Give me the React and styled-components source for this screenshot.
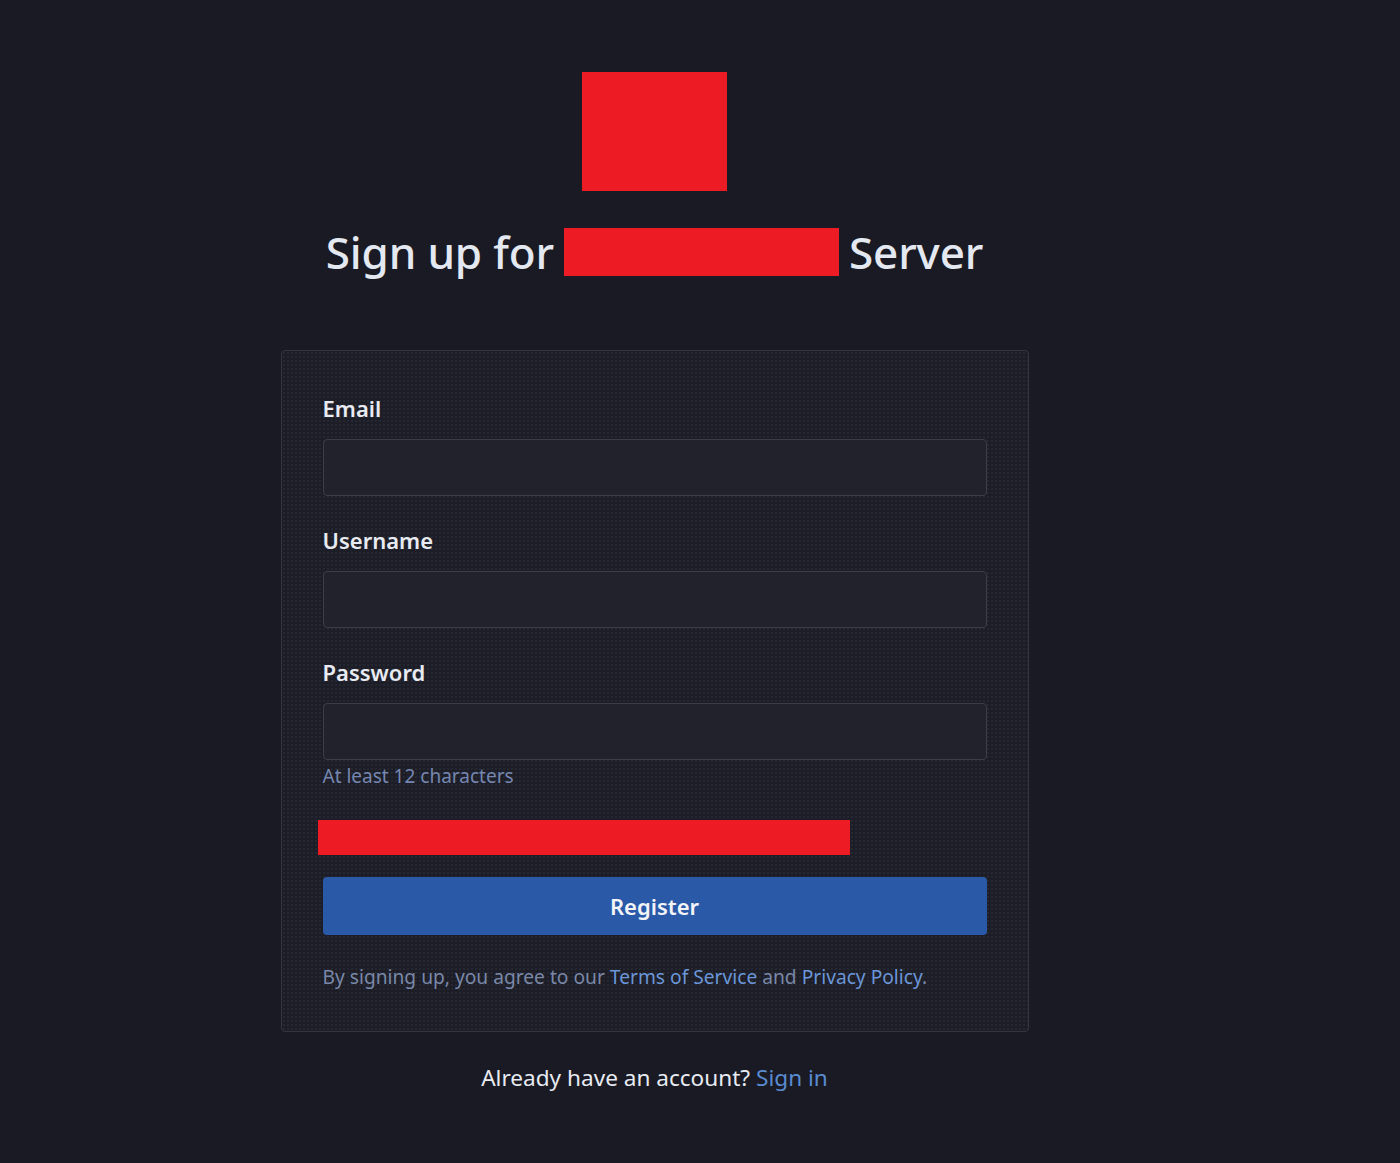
import React from "react";
import styled, { createGlobalStyle } from "styled-components";

const Global = createGlobalStyle`
  html, body { margin: 0; padding: 0; background: #191a23; }
  body { font-family: "Noto Sans", "Open Sans", sans-serif; color: #e6e9f0; }
  * { box-sizing: border-box; }
`;

const Page = styled.div`
  width: 1309px;
  min-height: 1163px;
  display: flex;
  flex-direction: column;
  align-items: center;
  padding-top: 72px;
`;

const Redacted = styled.div`
  background: #ed1c24;
  width: ${(p) => p.$w}px;
  height: ${(p) => p.$h}px;
  flex-shrink: 0;
`;

const Heading = styled.h1`
  margin: 35px 0 0;
  display: flex;
  align-items: center;
  gap: 10px;
  font-size: 44px;
  font-weight: 500;
  line-height: 52px;
  color: #e4e8f1;
  letter-spacing: -0.15px;
`;

const Card = styled.form`
  margin-top: 72px;
  width: 748px;
  background-color: #1c1d26;
  background-image: radial-gradient(rgba(150, 160, 190, 0.12) 0.6px, transparent 0.9px);
  background-size: 4px 4px;
  border: 1px solid #33353f;
  border-radius: 4px;
  padding: 42px 41px 41px;
  display: flex;
  flex-direction: column;
`;

const Field = styled.div`
  display: flex;
  flex-direction: column;
  margin-bottom: ${(p) => p.$mb || 0}px;
`;

const Label = styled.label`
  font-size: 22px;
  font-weight: 600;
  line-height: 30px;
  color: #e8ebf2;
  margin-bottom: 16px;
`;

const Input = styled.input`
  height: 57px;
  width: 100%;
  background: #21222c;
  border: 1px solid #3b3d48;
  border-radius: 4px;
  color: #e8ebf2;
  font-size: 18px;
  padding: 0 14px;
  outline: none;
`;

const Hint = styled.div`
  margin-top: 3px;
  font-size: 19px;
  line-height: 26px;
  color: #7587b0;
`;

const Bar = styled(Redacted)`
  margin: 31px 0 22px -5px;
`;

const Button = styled.button`
  height: 58px;
  width: 100%;
  border: none;
  border-radius: 4px;
  background: #2a5aa7;
  color: #f2f4f8;
  font-family: inherit;
  font-size: 22px;
  font-weight: 600;
  cursor: pointer;
`;

const Terms = styled.p`
  margin: 29px 0 0;
  font-size: 19.2px;
  line-height: 26px;
  color: #7a88a8;
`;

const Link = styled.a`
  color: ${(p) => (p.$bright ? "#5a8bd0" : "#6b96d8")};
  text-decoration: none;
`;

const Footer = styled.p`
  margin: 31px 0 0;
  font-size: 22.6px;
  line-height: 30px;
  color: #e8ebf2;
`;

export default function App() {
  return (
    <>
      <Global />
      <Page>
        <Redacted $w={145} $h={119} />
        <Heading>
          <span>Sign up for</span>
          <Redacted $w={275} $h={48} />
          <span>Server</span>
        </Heading>
        <Card onSubmit={(e) => e.preventDefault()}>
          <Field $mb={29}>
            <Label>Email</Label>
            <Input type="email" />
          </Field>
          <Field $mb={29}>
            <Label>Username</Label>
            <Input type="text" />
          </Field>
          <Field>
            <Label>Password</Label>
            <Input type="password" />
            <Hint>At least 12 characters</Hint>
          </Field>
          <Bar $w={532} $h={35} />
          <Button type="submit">Register</Button>
          <Terms>
            By signing up, you agree to our <Link href="#">Terms of Service</Link> and{" "}
            <Link href="#">Privacy Policy</Link>.
          </Terms>
        </Card>
        <Footer>
          Already have an account? <Link $bright href="#">Sign in</Link>
        </Footer>
      </Page>
    </>
  );
}
